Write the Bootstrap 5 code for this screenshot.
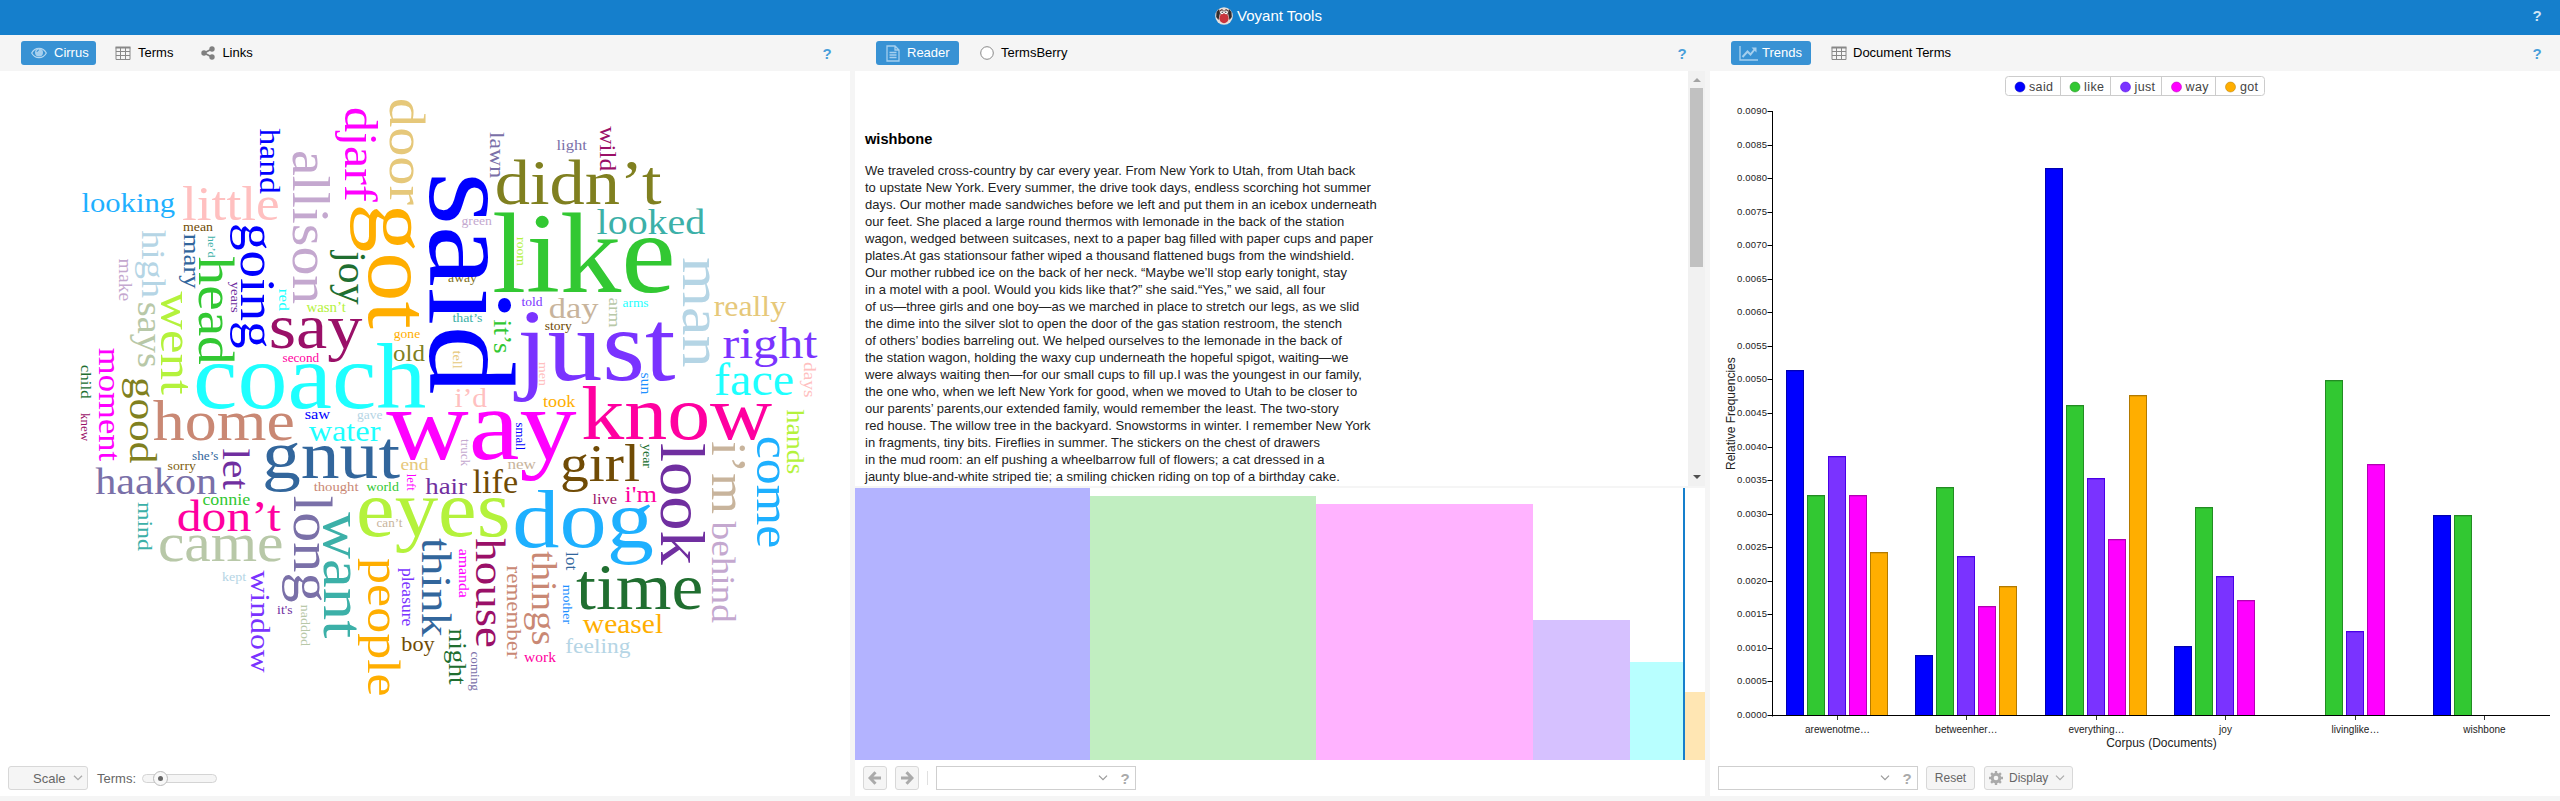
<!DOCTYPE html>
<html lang="en">
<head>
<meta charset="utf-8">
<title>Voyant Tools</title>
<link href="https://cdn.jsdelivr.net/npm/bootstrap@5.3.0/dist/css/bootstrap.min.css" rel="stylesheet">
<style>
html,body{height:801px;overflow:hidden}
body{font-family:"Liberation Sans",Arial,sans-serif;font-size:13px;line-height:17px;color:#000;background:#f5f5f5}
.app-head{height:35px;background:#157fcc;color:#fff;font-size:15px;padding-bottom:4px}
.app-head .title-gap{gap:4px;padding-right:23px}
.help{color:#4a9fda;font-weight:700;font-size:15px;width:12px;text-align:center}
.app-head .help{color:#d0e5f5;right:17px}
.workspace{height:766px;gap:5px}
.panel{width:850px;height:761px}
.tabs{height:36px;padding:6px 17px 6px 21px}
.tab-btn{height:24px;border-radius:3px;padding:0 9px 0 10px;gap:7px;white-space:nowrap}
.tab-btn span{padding-bottom:2px}
.tab-btn.on{background:#3892d4;color:#fff}
.tab-btn svg,.tool svg{flex:none}
.pane{background:#fff}
.tools{height:36px;background:#fff;color:#666}
.tool{height:24px;border:1px solid #d8d8d8;border-radius:3px;background:#f5f5f5}
.combo{width:200px;height:24px;border:1px solid #cfcfcf;background:#fff;padding-right:4px;gap:11px}
.combo .help{color:#aaa}
.sep{width:1px;height:14px;background:#e0e0e0;margin:0 8px}
.slider{width:75px;height:9px;border:1px solid #d4d4d4;border-radius:5px;background:#f5f5f5}
.knob{left:10px;top:-4px;width:15px;height:15px;border:1px solid #bbb;border-radius:50%;background:#f8f8f8}
.knob::after{content:"";position:absolute;left:4px;top:4px;width:5px;height:5px;border-radius:50%;background:#666}
.bodyrow{height:415px}
.reader{height:415px;width:833px;padding:58px 10px 0;color:#222}
.reader h1{font-size:14.6px;line-height:20px;font-weight:700;color:#000;margin:0 0 13px}
.reader p{white-space:nowrap;margin:0}
.scroller{width:17px;background:#f1f1f1;padding:7px 2px}
.thumb{height:179px;margin-top:6px;background:#c1c1c1}
.segments{height:272px;margin-top:2px;background:#fff}
.here{left:828px;width:2px;background:#157fcc}
text{font-family:"Liberation Sans",Arial,sans-serif}
.cloud text{font-family:"Liberation Serif","Times New Roman",serif}
</style>
</head>
<body class="d-flex flex-column">
<header class="app-head d-flex align-items-center position-relative">
  <div class="title-gap d-flex align-items-center justify-content-center w-100">
    <svg width="18" height="18" viewBox="0 0 18 18"><circle cx="9" cy="9" r="8.800" fill="#e6e0dc"/><path d="M1.500 5 4 2 5 6 3.500 13 1.200 10zM16.500 5 14 2 13 6l1.500 7 2.300-3z" fill="#332b2c"/><path d="M4.500 3.500 7 2l2 2 2-2 2.500 1.500-.5 4H5z" fill="#5a3532"/><ellipse cx="9" cy="11.200" rx="4.600" ry="5" fill="#c9343c"/><circle cx="7" cy="5.300" r="1.900" fill="#fff"/><circle cx="11" cy="5.300" r="1.900" fill="#fff"/><circle cx="7.200" cy="5.300" r=".7" fill="#222"/><circle cx="10.800" cy="5.300" r=".7" fill="#222"/></svg>
    <span>Voyant Tools</span>
  </div>
  <span class="help position-absolute">?</span>
</header>
<main class="workspace d-flex">
  <section class="panel d-flex flex-column">
    <nav class="tabs d-flex align-items-center">
      <div class="tab-btn on d-flex align-items-center" style="width:75px"><svg width="16" height="12" viewBox="0 0 16 12"><path d="M.7 6C4-.2 12-.2 15.300 6 12 12.200 4 12.200.7 6z" fill="none" stroke="#b5d7f0" stroke-width="1.200"/><circle cx="8" cy="5.500" r="4" fill="#a5cfee"/><path d="M6 5a2 2 0 0 1 2-2" fill="none" stroke="#3892d4"/></svg><span>Cirrus</span></div>
      <div class="tab-btn d-flex align-items-center" style="margin-left:9px"><svg width="16" height="14" viewBox="0 0 16 14"><path d="M1 1.500h14v12H1zM1 5.500h14M1 9.500h14M5.500 1v12M10.500 1v12" fill="none" stroke="#888"/><path d="M.5.5h15v2H.5z" fill="#888"/></svg><span>Terms</span></div>
      <div class="tab-btn d-flex align-items-center" style="margin-left:9px"><svg width="14" height="14" viewBox="0 0 14 14"><path d="M11 3 3 7l8 4" fill="none" stroke="#808080" stroke-width="1.800"/><g fill="#808080"><circle cx="11" cy="3" r="2.700"/><circle cx="3" cy="7" r="2.700"/><circle cx="11" cy="11" r="2.700"/></g></svg><span>Links</span></div>
      <span class="help ms-auto">?</span>
    </nav>
    <svg class="cloud pane d-block" id="cloud" width="850" height="689" viewBox="0 71 850 689"></svg>
    <div class="tools d-flex align-items-center ps-2">
      <div class="tool d-flex align-items-center" style="width:80px;padding-left:24px;gap:7px"><span>Scale</span><svg width="10" height="6" viewBox="0 0 10 6"><path d="m1 .7 4 4 4-4" fill="none" stroke="#aaa" stroke-width="1.300"/></svg></div>
      <span style="margin-left:9px">Terms:</span>
      <div class="slider position-relative" style="margin-left:6px"><i class="knob position-absolute"></i></div>
    </div>
  </section>
  <section class="panel d-flex flex-column">
    <nav class="tabs d-flex align-items-center">
      <div class="tab-btn on d-flex align-items-center" style="width:83px"><svg width="14" height="17" viewBox="0 0 14 17"><path d="M1 1h8l4 4v11H1zM9 1v4h4M3.500 7.500h7M3.500 10h7M3.500 12.500h7" fill="none" stroke="#a5cfee" stroke-width="1.300"/></svg><span>Reader</span></div>
      <div class="tab-btn d-flex align-items-center" style="margin-left:11px"><svg width="14" height="14" viewBox="0 0 14 14"><circle cx="7" cy="7" r="6.300" fill="#fff" stroke="#888"/></svg><span>TermsBerry</span></div>
      <span class="help ms-auto">?</span>
    </nav>
    <div class="bodyrow d-flex">
      <article class="reader pane">
        <h1>wishbone</h1>
        <p>We traveled cross-country by car every year. From New York to Utah, from Utah back<br>to upstate New York. Every summer, the drive took days, endless scorching hot summer<br>days. Our mother made sandwiches before we left and put them in an icebox underneath<br>our feet. She placed a large round thermos with lemonade in the back of the station<br>wagon, wedged between suitcases, next to a paper bag filled with paper cups and paper<br>plates.At gas stationsour father wiped a thousand flattened bugs from the windshield.<br>Our mother rubbed ice on the back of her neck. “Maybe we’ll stop early tonight, stay<br>in a motel with a pool. Would you kids like that?” she said.“Yes,” we said, all four<br>of us—three girls and one boy—as we marched in place to stretch our legs, as we slid<br>the dime into the silver slot to open the door of the gas station restroom, the stench<br>of others’ bodies barreling out. We helped ourselves to the lemonade in the back of<br>the station wagon, holding the waxy cup underneath the hopeful spigot, waiting—we<br>were always waiting then—for our small cups to fill up.I was the youngest in our family,<br>the one who, when we left New York for good, when we moved to Utah to be closer to<br>our parents’ parents,our extended family, would remember the least. The two-story<br>red house. The willow tree in the backyard. Snowstorms in winter. I remember New York<br>in fragments, tiny bits. Fireflies in summer. The stickers on the chest of drawers<br>in the mud room: an elf pushing a wheelbarrow full of flowers; a cat dressed in a<br>jaunty blue-and-white striped tie; a smiling chicken riding on top of a birthday cake.</p>
      </article>
      <div class="scroller d-flex flex-column align-items-center">
        <svg width="8" height="4" viewBox="0 0 8 4"><path d="M0 4 4 0l4 4z" fill="#a3a3a3"/></svg>
        <div class="thumb w-100"></div>
        <svg class="mt-auto" width="8" height="4" viewBox="0 0 8 4"><path d="m0 0 4 4 4-4z" fill="#505050"/></svg>
      </div>
    </div>
    <div class="segments d-flex align-items-end position-relative" id="segments"><i class="here position-absolute h-100"></i></div>
    <div class="tools d-flex align-items-center ps-2">
      <div class="tool d-flex align-items-center justify-content-center" style="width:24px"><svg width="14" height="14" viewBox="0 0 14 14"><path d="M7.500 1.200 2 7l5.500 5.800M2.500 7H13" fill="none" stroke="#aaa" stroke-width="3"/></svg></div>
      <div class="tool d-flex align-items-center justify-content-center ms-2" style="width:24px"><svg width="14" height="14" viewBox="0 0 14 14"><path d="M6.500 1.200 12 7l-5.500 5.800M11.500 7H1" fill="none" stroke="#aaa" stroke-width="3"/></svg></div>
      <i class="sep"></i>
      <div class="combo d-flex align-items-center justify-content-end"><svg width="10" height="6" viewBox="0 0 10 6"><path d="m1 .7 4 4 4-4" fill="none" stroke="#999" stroke-width="1.200"/></svg><span class="help">?</span></div>
    </div>
  </section>
  <section class="panel d-flex flex-column">
    <nav class="tabs d-flex align-items-center">
      <div class="tab-btn on d-flex align-items-center" style="width:80px;padding-left:8px;gap:4px"><svg width="19" height="15" viewBox="0 0 19 15"><path d="M1 0v14h18" fill="none" stroke="#a5cfee" stroke-width="1.400"/><path d="m3.500 11 5-5.500 3 3 4-5" fill="none" stroke="#a5cfee" stroke-width="2"/><path d="M12.500 1.500h5v5z" fill="#a5cfee"/></svg><span>Trends</span></div>
      <div class="tab-btn d-flex align-items-center" style="margin-left:10px;gap:6px"><svg width="16" height="14" viewBox="0 0 16 14"><path d="M1 1.500h14v12H1zM1 5.500h14M1 9.500h14M5.500 1v12M10.500 1v12" fill="none" stroke="#888"/><path d="M.5.5h15v2H.5z" fill="#888"/></svg><span>Document Terms</span></div>
      <span class="help ms-auto">?</span>
    </nav>
    <svg class="pane d-block" id="trends" width="850" height="689" viewBox="1710 71 850 689"></svg>
    <div class="tools d-flex align-items-center ps-2">
      <div class="combo d-flex align-items-center justify-content-end"><svg width="10" height="6" viewBox="0 0 10 6"><path d="m1 .7 4 4 4-4" fill="none" stroke="#999" stroke-width="1.200"/></svg><span class="help">?</span></div>
      <div class="tool d-flex align-items-center justify-content-center ms-2" style="width:49px;font-size:12px">Reset</div>
      <div class="tool d-flex align-items-center" style="width:89px;margin-left:9px;padding-left:4px;font-size:12px"><svg width="14" height="14" viewBox="0 0 14 14"><circle cx="7" cy="7" r="3.800" fill="none" stroke="#aaa" stroke-width="3"/><path d="M7 0v14M0 7h14M2.100 2.100l9.800 9.800M11.900 2.100l-9.800 9.800" stroke="#aaa" stroke-width="2.400"/><circle cx="7" cy="7" r="2.300" fill="#f5f5f5"/></svg><span style="margin-left:6px">Display</span><svg style="margin-left:7px" width="10" height="6" viewBox="0 0 10 6"><path d="m1 .7 4 4 4-4" fill="none" stroke="#aaa" stroke-width="1.200"/></svg></div>
    </div>
  </section>
</main>
<script src="https://cdn.jsdelivr.net/npm/bootstrap@5.3.0/dist/js/bootstrap.bundle.min.js"></script>
<script>
const NS='http://www.w3.org/2000/svg';
function add(parent,tag,attrs,text){const e=document.createElementNS(NS,tag);for(const k in attrs)e.setAttribute(k,attrs[k]);if(text!==undefined)e.textContent=text;parent.appendChild(e);return e}

// Terms of the cloud: word, start, end, baseline, colour, one per entry
const across=`looking 82 174.7 212.300 1fb0ff;little 183 279 220 ffc0c0;mean 183.3 212.8 231.3 704b05;wasn’t 306.7 345.7 312 b4f23c;say 270 361.5 347.7 9a1068;second 282.7 319 361.7 ff00a0;gone 394 420 338 ffae00;old 393.5 424.5 361 808020;coach 195 425 407.7 1effff;light 556.7 586.7 149.7 7a70a8;didn’t 496 660.7 204 808020;green 461.7 491.7 225 c4a8cf;like 494.3 674 291.7 32c832;looked 597.3 704.7 233.7 3cb0a8;away 448.3 476.7 282.3 807020;told 521.7 542.3 306 7a33ff;day 549.3 598 317.7 c8b49c;arms 622.7 648.3 307.3 1effff;really 714.3 785.7 316 e6c87a;right 723.3 816.7 358.3 7a33ff;face 715 793.3 395.3 1effff;just 519 674 380 7a33ff;story 545 571.7 330 704b05;that’s 452.7 482.3 322 3cb0a8;i’d 455 486.7 406.7 ffc0c0;took 543.3 575 407.3 ffae00;know 582.7 771 439 ff00a0;home 154 294 440.3 c98874;saw 305 330 419 0000ff;gave 357.3 382.3 419 b5d5e5;water 309.3 380 440.7 1effff;way 388.3 575 459.3 ff00ff;new 507.7 535.7 469 c8b49c;girl 561 639.3 480.7 704b05;hair 425.7 466.7 493.7 702fa0;life 473.3 517.7 492.7 704b05;live 592.7 616.7 504 9a1068;i'm 625 656.7 502 ff00a0;end 400.7 428.3 469.7 e6c87a;gnut 263.3 399 477.7 32669c;thought 314 358.3 491 c98874;world 366.7 398.7 491 32c832;she’s 192.3 218.3 459.7 32669c;sorry 167.7 195.7 470 806010;haakon 96 216.7 493.7 7a70a8;connie 202.7 250 505 32c832;don’t 177.7 280 531.3 ff00a0;came 159 282.7 561 b8c8a8;eyes 357.7 509.3 536 b4f23c;can’t 376.7 402.3 526.7 c8b49c;dog 514 652.7 547 1eb0ff;time 577.3 702.3 609 206e30;weasel 583.3 662.7 632.7 ffae00;feeling 565.7 630 653 b5d5e5;work 524.3 555.7 662 ff00a0;boy 401.7 434.3 650.7 704b05;kept 222.3 246 581 b5d5e5;it's 277.3 292.3 614 702fa0`;
const down=`hand 129 193.5 260 0000ff;allison 151 303.5 292.5 c4a8cf;djarf 108 201 344.7 ff00ff;door 99 204 389.5 e6c87a;got 205 327.5 369 ffae00;mary 234.3 288.3 183.5 32669c;he’d 236 257.5 207.5 3cb0a8;going 224 347.7 240.7 0000ff;head 257.5 364 198.7 32c832;high 231 297.5 142 b5d5e5;make 259 301 119.3 c4a8cf;says 302.5 367.5 137.7 b8c8a8;went 292.5 394 161 b4f23c;years 282 312.5 230.7 702fa0;red 289 310.7 279.3 1effff;joy 252 304 338.7 206e30;child 365 398.5 81 206e30;moment 348.3 460.7 99.3 ff00ff;good 377.7 462.7 130 808020;lawn 132.3 177.7 490.3 7a70a8;wild 126.7 171 600 9a1068;said 174.3 392.7 430 0000ff;room 237.3 265.7 517.3 b4f23c;man 258.3 366.7 682.7 b5d5e5;arm 297.7 327.3 609 b8c8a8;days 362.3 397.3 804.3 ffc0c0;it’s 320 353.3 494.3 32c832;tell 350.7 368.7 453.3 e6c87a;men 362.3 385.7 539 ffc0c0;sun 372.7 394.3 641.3 1e90ff;knew 413.3 441 80.7 9a1068;small 422.7 450 516 0000ff;truck 439.3 466 461 c4a8cf;year 444.3 467.7 643.3 206e30;look 444.3 564 660.7 702fa0;i’m 442.3 513.3 712.3 c8b49c;come 436.7 547.7 757.3 1eb0ff;hands 410 474 787.3 b4f23c;left 474 490.7 407 ff00ff;let 449.3 489.3 223.3 702fa0;mind 502.3 550.7 138.3 3cb0a8;long 496.7 601.7 294 7a70a8;want 513.3 637.3 324.3 3cb0a8;people 559 696 368.3 ffae00;pleasure 568.3 626 402.3 7a33ff;think 539 636 422.3 32669c;amanda 549 597.7 459.3 ff00ff;house 539 647.3 476 9a1068;lot 552.3 570 566 32669c;mother 585 624 563.3 1e90ff;things 551.7 645 532.3 c98874;remember 566 658.3 507.3 c98874;behind 522.3 622.3 712.3 c4a8cf;coming 651.7 690.7 471 7a70a8;night 629 684.3 449.3 206e30;window 571 672.3 251 7a33ff;naddod 605 645.7 300.7 b8c8a8`;
// Old-style serif advance widths (1/1000 em) give each word its size from its length
const adv={a:500,b:553,c:444,d:611,e:479,f:333,g:556,h:582,i:291,j:234,k:556,l:291,m:883,n:582,o:546,p:601,r:395,s:424,t:326,u:603,v:565,w:834,y:556,"'":208,'’':278};
const cloud=document.getElementById('cloud');
function word(entry,vertical){
  const [w,a,b,base,c]=entry.split(' '),ink=b-a;
  const size=ink/[...w].reduce((s,ch)=>s+adv[ch],0)*1000*1.03;
  const start=a-size*.02,len=ink+size*.035;
  const at={'font-size':size.toFixed(2),textLength:len.toFixed(1),lengthAdjust:'spacingAndGlyphs',fill:'#'+c};
  if(vertical)at.transform=`translate(${base} ${start.toFixed(1)}) rotate(90)`;else{at.x=start.toFixed(1);at.y=base}
  add(cloud,'text',at,w);
}
across.split(';').forEach(e=>word(e,false));
down.split(';').forEach(e=>word(e,true));

// Document lengths under the reader
const seg=document.getElementById('segments');
[[235,272,'#b3b3ff'],[226,264,'#c1eec1'],[217,256,'#ffb3ff'],[97,140,'#d6c1ff'],[53,98,'#b8ffff'],[22,68,'#ffe6b3']].forEach(([w,h,c])=>{
  const d=document.createElement('div');d.style.cssText=`width:${w}px;height:${h}px;background:${c}`;seg.insertBefore(d,seg.lastElementChild);
});

// Trends chart
const tr=document.getElementById('trends');
const cols=['#0000ff','#32c832','#7a33ff','#ff00ff','#ffae00'],edges=['#0000b3','#238c23','#4a00e6','#b300b3','#b37a00'];
add(tr,'rect',{x:2005.5,y:76.5,width:259,height:19,rx:3,fill:'#fff',stroke:'#ccc'});
[2060.5,2110.5,2161.5,2215.5].forEach(x=>add(tr,'path',{d:`M${x} 76v20`,stroke:'#ccc'}));
[['said',2020,2029,24],['like',2075,2084,20],['just',2125.5,2134.5,20.5],['way',2176.5,2185.5,23],['got',2230.5,2240,18]].forEach(([t,cx,x,w],i)=>{
  add(tr,'circle',{cx,cy:87,r:5,fill:cols[i],stroke:edges[i],'stroke-width':.5});
  add(tr,'text',{x,y:91,'font-size':12.5,textLength:w,fill:'#444'},t);
});
for(let i=0;i<=18;i++){
  const y=Math.round(715-i*33.556)+.5;
  add(tr,'path',{d:`M1767.5 ${y}h5`,stroke:'#000'});
  add(tr,'text',{x:1767,y:y+2.5,'text-anchor':'end','font-size':9.5,textLength:30,fill:'#222'},(i*.0005).toFixed(4));
}
const docs=[['arewenotme…',1786,1837,[370,495,456,495,552]],['betweenher…',1915,1966,[655,487,556,606,586]],['everything…',2045,2096,[168,405,478,539,395]],['joy',2174,2225,[646,507,576,600]],['livinglike…',2304,2355,[0,380,631,464]],['wishbone',2433,2484,[515,515]]];
docs.forEach(([name,x0,mid,tops])=>{
  tops.forEach((t,i)=>{if(!t)return;const x=x0+i*21;
    add(tr,'rect',{x:x+.5,y:t+.5,width:17,height:715-t,fill:cols[i],stroke:edges[i]});
    add(tr,'rect',{x:x+1,y:t+1,width:16,height:1,fill:edges[i],opacity:.3});
  });
  add(tr,'path',{d:`M${mid+.5} 716v4`,stroke:'#333'});
  add(tr,'text',{x:mid+.5,y:733,'text-anchor':'middle','font-size':10,fill:'#222'},name);
});
add(tr,'path',{d:'M1772.500 111v605.500',stroke:'#000'});
add(tr,'path',{d:'M1772 715.500h778',stroke:'#000'});
add(tr,'text',{x:2161.5,y:747,'text-anchor':'middle','font-size':12,fill:'#222'},'Corpus (Documents)');
add(tr,'text',{transform:'translate(1735 470) rotate(-90)','font-size':12,fill:'#222'},'Relative Frequencies');
</script>
</body>
</html>
